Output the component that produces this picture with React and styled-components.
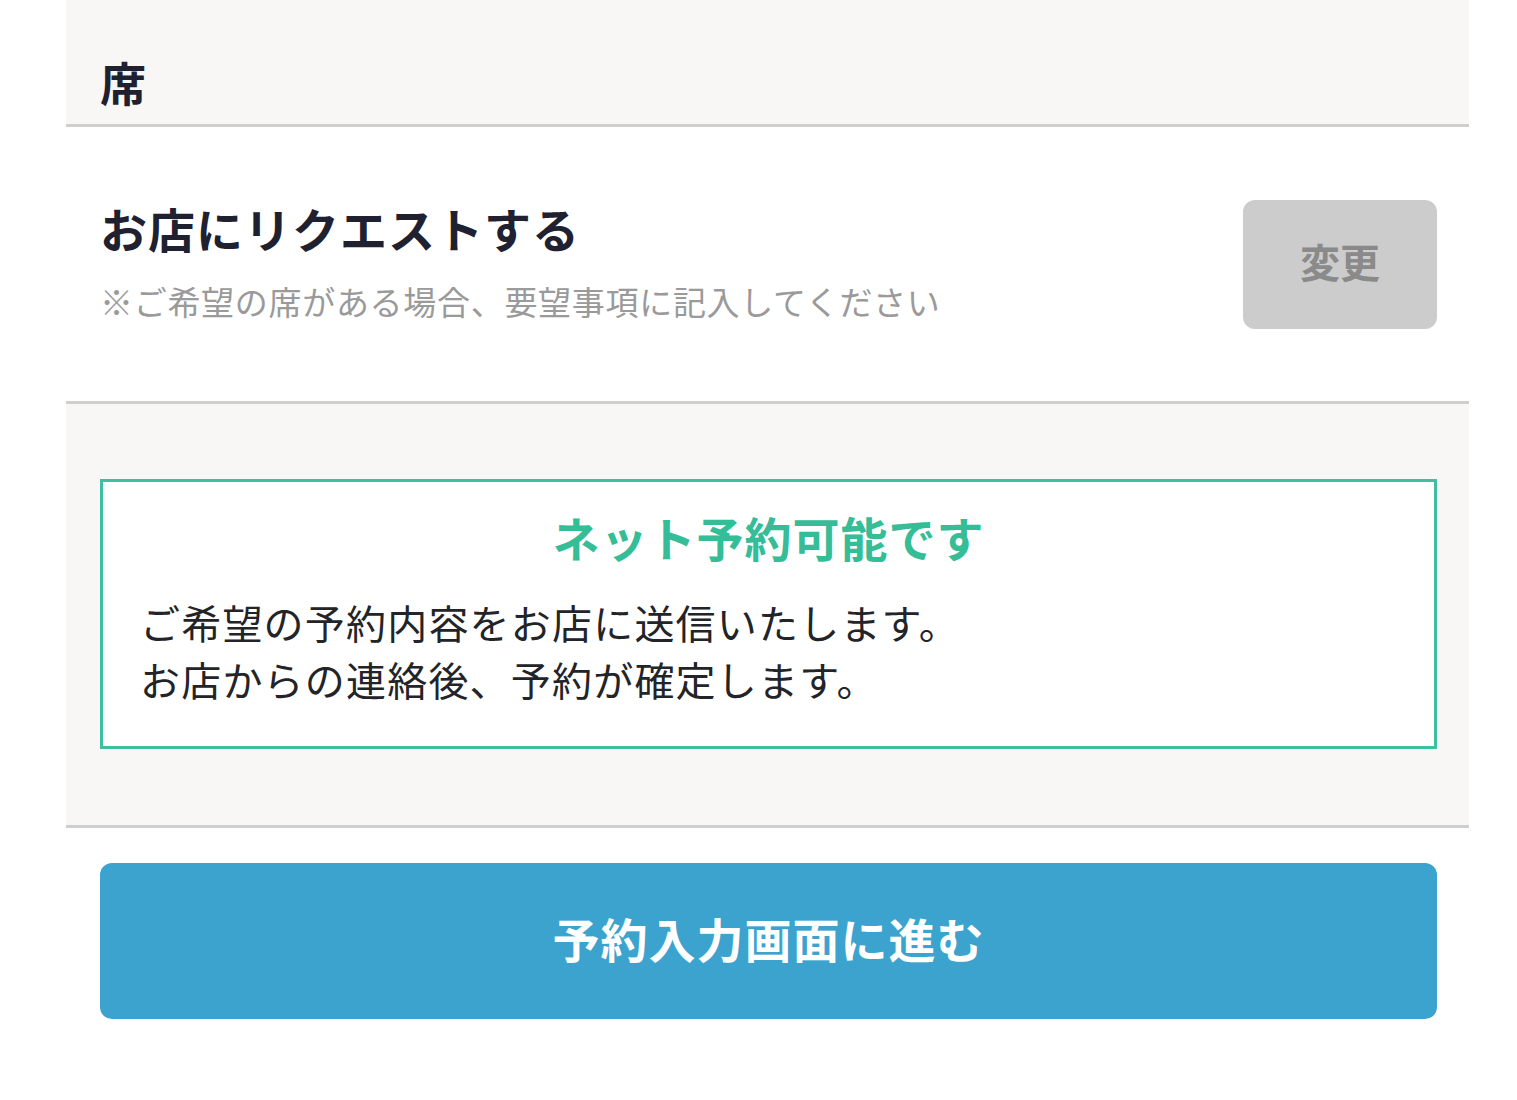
import React from "react";
import styled, { createGlobalStyle } from "styled-components";

const GlobalStyle = createGlobalStyle`
  html, body {
    margin: 0;
    padding: 0;
    background: #ffffff;
  }
  body {
    font-family: "Noto Sans CJK JP", "Noto Sans", sans-serif;
    color: #1f2130;
  }
`;

const Page = styled.div`
  width: 1403px;
  margin-left: 66px;
`;

const SectionHeader = styled.div`
  height: 127px;
  box-sizing: border-box;
  display: flex;
  align-items: flex-end;
  padding: 0 34px 20px;
  background: #f8f7f6;
  border-bottom: 3px solid #cfcfcf;
`;

const HeaderTitle = styled.h2`
  margin: 0;
  font-size: 46px;
  line-height: 46px;
  font-weight: 700;
  color: #1f2130;
`;

const SeatRow = styled.div`
  height: 277px;
  box-sizing: border-box;
  display: flex;
  align-items: center;
  justify-content: space-between;
  padding: 0 32px 0 34px;
  border-bottom: 3px solid #cfcfcf;
`;

const SeatText = styled.div`
  display: flex;
  flex-direction: column;
  gap: 34px;
  margin-top: -6px;
`;

const SeatTitle = styled.div`
  font-size: 47px;
  line-height: 47px;
  font-weight: 700;
  letter-spacing: 1px;
  color: #1f2130;
`;

const SeatNote = styled.div`
  font-size: 33px;
  line-height: 33px;
  letter-spacing: 0.7px;
  color: #9a9a9a;
`;

const ChangeButton = styled.button`
  width: 194px;
  height: 129px;
  padding: 0 0 6px;
  border: none;
  border-radius: 12px;
  background: #cccccc;
  color: #8a8a8a;
  font-family: inherit;
  font-size: 40px;
  font-weight: 700;
  cursor: default;
`;

const NoticeArea = styled.div`
  background: #f8f7f6;
  padding: 75px 32px 76px 34px;
  border-bottom: 3px solid #cfcfcf;
`;

const NoticeBox = styled.div`
  background: #ffffff;
  border: 3px solid #3cc09f;
  padding: 31px 37px 38px;
  display: flex;
  flex-direction: column;
  gap: 34px;
`;

const NoticeTitle = styled.div`
  text-align: center;
  font-size: 47px;
  line-height: 47px;
  font-weight: 700;
  letter-spacing: 1px;
  color: #34bd97;
`;

const NoticeBody = styled.p`
  margin: 0;
  font-size: 40px;
  line-height: 57px;
  letter-spacing: 1.2px;
  color: #222428;
`;

const Footer = styled.div`
  padding: 35px 32px 80px 34px;
`;

const ProceedButton = styled.button`
  width: 100%;
  height: 156px;
  padding: 0 0 8px;
  border: none;
  border-radius: 12px;
  background: #3ca3cf;
  color: #ffffff;
  font-family: inherit;
  font-size: 47px;
  font-weight: 700;
  letter-spacing: 1px;
  cursor: pointer;
`;

export default function App() {
  return (
    <>
      <GlobalStyle />
      <Page>
        <SectionHeader>
          <HeaderTitle>席</HeaderTitle>
        </SectionHeader>
        <SeatRow>
          <SeatText>
            <SeatTitle>お店にリクエストする</SeatTitle>
            <SeatNote>※ご希望の席がある場合、要望事項に記入してください</SeatNote>
          </SeatText>
          <ChangeButton>変更</ChangeButton>
        </SeatRow>
        <NoticeArea>
          <NoticeBox>
            <NoticeTitle>ネット予約可能です</NoticeTitle>
            <NoticeBody>
              ご希望の予約内容をお店に送信いたします。
              <br />
              お店からの連絡後、予約が確定します。
            </NoticeBody>
          </NoticeBox>
        </NoticeArea>
        <Footer>
          <ProceedButton>予約入力画面に進む</ProceedButton>
        </Footer>
      </Page>
    </>
  );
}
